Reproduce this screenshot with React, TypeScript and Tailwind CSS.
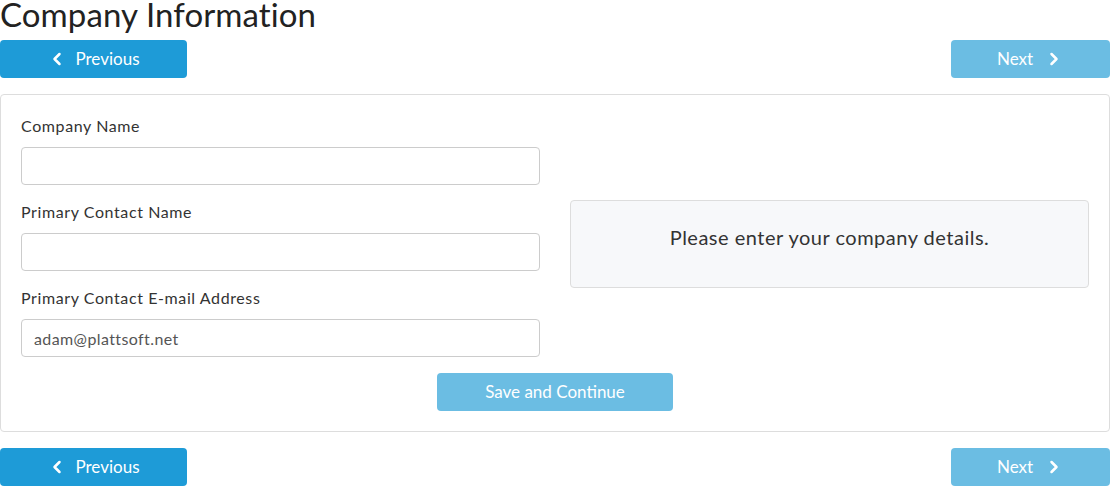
import { ChevronLeft, ChevronRight } from "lucide-react";

const font = { fontFamily: "Lato, 'Open Sans', sans-serif" };

function NavButtons() {
  return (
    <div className="flex items-center justify-between">
      <button className="flex h-[38px] w-[187px] items-center justify-center gap-[8px] rounded-[4px] bg-[#1e9bd7] text-[17px] text-white">
        <ChevronLeft size={20} strokeWidth={3} />
        <span>Previous</span>
      </button>
      <button className="flex h-[38px] w-[159px] items-center justify-center gap-[11px] rounded-[4px] bg-[#6bbde3] text-[17px] text-white">
        <span>Next</span>
        <ChevronRight size={20} strokeWidth={3} />
      </button>
    </div>
  );
}

function Field({ label, value }: { label: string; value?: string }) {
  return (
    <div className="flex flex-col">
      <label className="mb-[10px] text-[16px] leading-[22px] tracking-[0.6px] text-[#333]">{label}</label>
      <input
        readOnly
        value={value ?? ""}
        className="h-[38px] rounded-[4px] border border-[#ccc] px-3 text-[16px] tracking-[0.4px] text-[#555] outline-none"
        style={font}
      />
    </div>
  );
}

export default function App() {
  return (
    <div className="w-[1110px] bg-white pt-[1px] text-[#333]" style={font}>
      <h1 className="text-[33px] leading-[26px] tracking-[0.1px] text-[#222]">Company Information</h1>
      <div className="mt-[13px]">
        <NavButtons />
      </div>

      <div className="mt-[16px] rounded-[4px] border border-[#ddd] px-[20px] pt-[20px] pb-[20px]">
        <div className="grid grid-cols-2 gap-[30px]">
          <div className="flex flex-col gap-[16px]">
            <Field label="Company Name" />
            <Field label="Primary Contact Name" />
            <Field label="Primary Contact E-mail Address" value="adam@plattsoft.net" />
          </div>
          <div>
            <div className="mt-[85px] flex h-[88px] justify-center rounded-[4px] border border-[#ddd] bg-[#f7f8fa] pt-[24px] text-[20px] leading-[24px] tracking-[0.5px] text-[#333]">
              Please enter your company details.
            </div>
          </div>
        </div>
        <div className="mt-[16px] flex justify-center">
          <button className="h-[38px] w-[236px] rounded-[4px] bg-[#6bbde3] text-[17px] text-white">
            Save and Continue
          </button>
        </div>
      </div>

      <div className="mt-[16px]">
        <NavButtons />
      </div>
    </div>
  );
}
